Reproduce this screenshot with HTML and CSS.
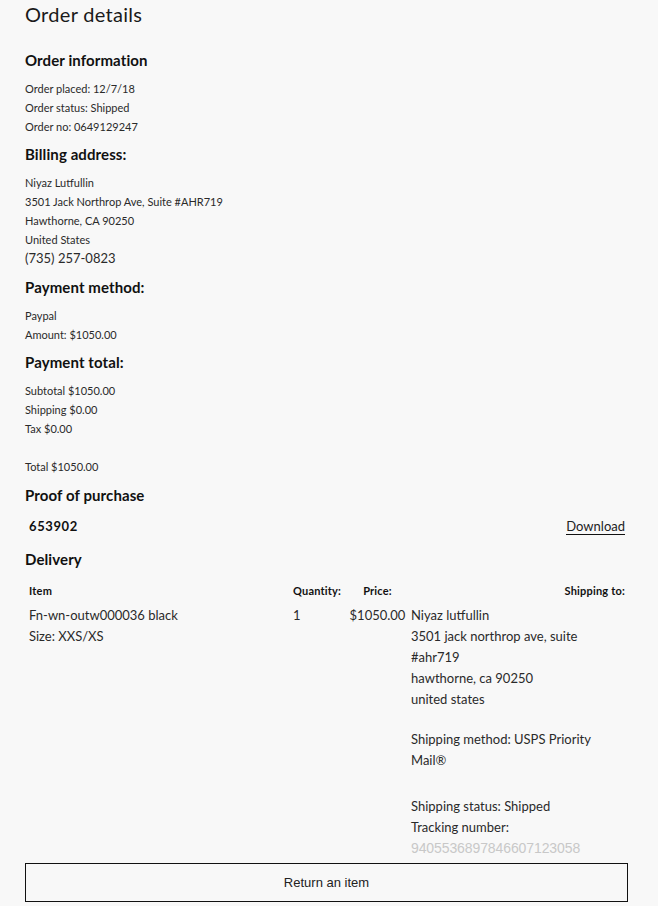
FILE: index.html
```html
<!DOCTYPE html>
<html lang="en">
<head>
<meta charset="utf-8">
<title>Order details</title>
<link rel="stylesheet" href="styles.css">
</head>
<body>
<main class="page">
  <h1 class="title">Order details</h1>

  <section class="block block-first">
    <h2 class="heading">Order information</h2>
    <p class="line">Order placed: 12/7/18</p>
    <p class="line">Order status: Shipped</p>
    <p class="line">Order no: 0649129247</p>
  </section>

  <section class="block">
    <h2 class="heading">Billing address:</h2>
    <p class="line">Niyaz Lutfullin</p>
    <p class="line">3501 Jack Northrop Ave, Suite #AHR719</p>
    <p class="line">Hawthorne, CA 90250</p>
    <p class="line">United States</p>
    <p class="line phone">(735) 257-0823</p>
  </section>

  <section class="block">
    <h2 class="heading">Payment method:</h2>
    <p class="line">Paypal</p>
    <p class="line">Amount: $1050.00</p>
  </section>

  <section class="block">
    <h2 class="heading">Payment total:</h2>
    <p class="line">Subtotal $1050.00</p>
    <p class="line">Shipping $0.00</p>
    <p class="line">Tax $0.00</p>
    <p class="line total">Total $1050.00</p>
  </section>

  <section class="block">
    <h2 class="heading">Proof of purchase</h2>
    <div class="proof">
      <span class="proof-code">653902</span>
      <a class="download" href="#">Download</a>
    </div>
  </section>

  <section class="block delivery">
    <h2 class="heading">Delivery</h2>
    <div class="table">
      <div class="th">Item</div>
      <div class="th">Quantity:</div>
      <div class="th th-center">Price:</div>
      <div class="th th-right">Shipping to:</div>

      <div class="td">Fn-wn-outw000036 black<br>Size: XXS/XS</div>
      <div class="td">1</div>
      <div class="td td-center">$1050.00</div>
      <div class="td td-ship">
        <p class="ship-group">Niyaz lutfullin<br>3501 jack northrop ave, suite<br>#ahr719<br>hawthorne, ca 90250<br>united states</p>
        <p class="ship-group ship-method">Shipping method: USPS Priority<br>Mail®</p>
        <p class="ship-group ship-status">Shipping status: Shipped<br>Tracking number:<br><span class="tracking">9405536897846607123058</span></p>
      </div>
    </div>
  </section>

  <button class="return-btn" type="button">Return an item</button>
</main>
</body>
</html>
```

FILE: styles.css
```css
* { box-sizing: border-box; }

html, body {
  margin: 0;
  padding: 0;
  background: #f8f8f8;
}

body {
  font-family: Lato, "Open Sans", sans-serif;
  color: #222;
}

.page {
  width: 658px;
  padding: 0 30px 0 25px;
}

.title {
  margin: 0;
  font-size: 20px;
  font-weight: 400;
  line-height: 28px;
  color: #1a1a1a;
  letter-spacing: 0.3px;
}

.block { margin-top: 8.5px; }
.block-first { margin-top: 21.5px; }

.heading {
  margin: 0 0 9px;
  font-size: 15px;
  font-weight: 700;
  line-height: 20px;
  color: #111;
  letter-spacing: 0.1px;
}

.line {
  margin: 0;
  font-size: 11px;
  line-height: 19px;
  color: #2a2a2a;
}

.phone {
  font-size: 13px;
  line-height: 19px;
  margin-bottom: 1.5px;
}

.total { margin-top: 19px; }

.proof {
  display: flex;
  justify-content: space-between;
  align-items: center;
  padding: 0 3px 0 4px;
  margin-top: 11.5px;
  line-height: 21px;
}

.proof-code {
  font-size: 13px;
  font-weight: 700;
  letter-spacing: 0.6px;
  color: #111;
}

.download {
  font-size: 13px;
  color: #222;
  text-decoration: none;
  border-bottom: 1px solid #111;
  line-height: 16px;
}

.delivery { margin-top: 12px; }

.table {
  display: grid;
  grid-template-columns: 264px 52px 65px 1fr;
  padding: 0 3px 0 4px;
  margin-top: 11px;
}

.th {
  font-size: 11px;
  font-weight: 700;
  line-height: 21px;
  color: #111;
  margin-bottom: 4px;
  letter-spacing: 0.2px;
}

.th-center { text-align: center; }
.th-right { text-align: right; }

.td {
  font-size: 13px;
  line-height: 21px;
  color: #2a2a2a;
}

.td-center { text-align: center; }
.td-ship { padding-left: 1px; }

.ship-group { margin: 0; }
.ship-method { margin-top: 19px; }
.ship-status { margin-top: 25px; }

.tracking {
  font-family: "Liberation Sans", Arial, sans-serif;
  font-size: 14px;
  letter-spacing: -0.1px;
  color: #c8c8c8;
}

.return-btn {
  display: block;
  width: 603px;
  height: 39px;
  margin-top: 4px;
  background: transparent;
  border: 1px solid #111;
  font-family: "Liberation Sans", Arial, sans-serif;
  font-size: 13px;
  color: #222;
  cursor: pointer;
}
```
